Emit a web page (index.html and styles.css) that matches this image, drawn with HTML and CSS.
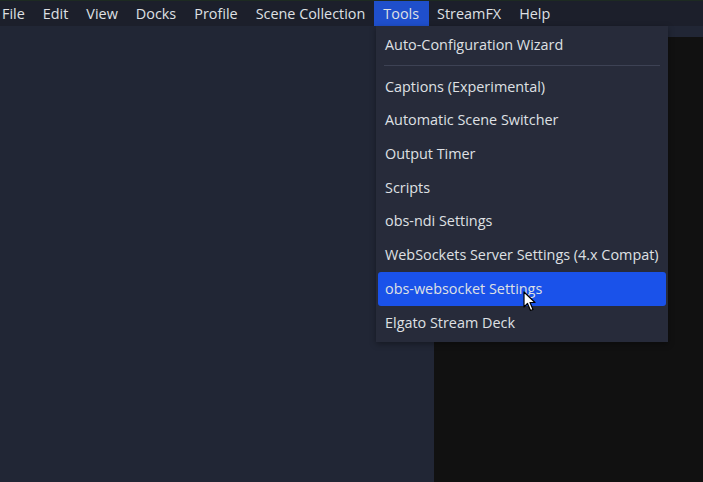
FILE: index.html
```html
<!DOCTYPE html>
<html lang="en">
<head>
    <meta charset="UTF-8">
    <title>OBS Tools Menu</title>
    <link rel="stylesheet" href="styles.css">
</head>
<body>

    <!-- Menu Bar -->
    <div class="menubar">
        <span class="menu-item">File</span>
        <span class="menu-item">Edit</span>
        <span class="menu-item">View</span>
        <span class="menu-item">Docks</span>
        <span class="menu-item">Profile</span>
        <span class="menu-item">Scene Collection</span>
        <span class="menu-item open">Tools</span>
        <span class="menu-item">StreamFX</span>
        <span class="menu-item">Help</span>
    </div>

    <!-- Workspace -->
    <div class="workspace">
        <div class="left-pane"></div>
        <div class="right-pane">
            <div class="preview"></div>
        </div>
    </div>

    <!-- Tools dropdown -->
    <div class="dropdown">
        <div class="entry">Auto-Configuration Wizard</div>
        <div class="separator"></div>
        <div class="entry">Captions (Experimental)</div>
        <div class="entry">Automatic Scene Switcher</div>
        <div class="entry">Output Timer</div>
        <div class="entry">Scripts</div>
        <div class="entry">obs-ndi Settings</div>
        <div class="entry">WebSockets Server Settings (4.x Compat)</div>
        <div class="entry active">obs-websocket Settings</div>
        <div class="entry">Elgato Stream Deck</div>
    </div>

    <!-- Mouse pointer -->
    <svg class="pointer" width="14" height="21" viewBox="0 0 14 21">
        <path d="M1 1 L1 16 L4.5 12.5 L7.5 19.5 L10 18.5 L7 11.5 L12 11.5 Z" fill="#ffffff" stroke="#000000" stroke-width="1.2" stroke-linejoin="round"/>
    </svg>

</body>
</html>
```

FILE: styles.css
```css
/* Basic Styling */
body {
    margin: 0;
    width: 703px;
    height: 482px;
    overflow: hidden;
    position: relative;
    font-family: "Open Sans", "Noto Sans", sans-serif;
    font-size: 14.4px;
    color: #dfe0e4;
    background-color: #212635;
}

/* Menu Bar */
.menubar {
    display: flex;
    gap: 18px;
    height: 26px;
    align-items: center;
    padding-left: 2px;
    background-color: #1c1f2b;
    border-top: 1px solid #1d2a22;
    box-sizing: border-box;
}

.menu-item {
    line-height: 25px;
    white-space: nowrap;
}

.menu-item.open {
    background-color: #1f4fcc;
    padding: 0 10px 0 9px;
    margin: 0 -10px 0 -9px;
}

/* Workspace */
.workspace {
    display: flex;
    height: 456px;
}

.left-pane {
    width: 434px;
    background-color: #212635;
}

.right-pane {
    flex: 1;
    padding-top: 11px;
    display: flex;
    flex-direction: column;
}

.preview {
    flex: 1;
    background-color: #111111;
}

/* Dropdown */
.dropdown {
    position: absolute;
    left: 376px;
    top: 26px;
    width: 292px;
    padding: 2px 2px 3px;
    box-sizing: border-box;
    background-color: #272b3a;
    box-shadow: 0 2px 6px rgba(0, 0, 0, 0.35);
}

.entry {
    height: 33.7px;
    line-height: 33.7px;
    padding-left: 7px;
    white-space: nowrap;
    border-radius: 3px;
}

.entry.active {
    background-color: #1a52ea;
}

.separator {
    height: 1px;
    margin: 3px 6px 4px 6px;
    background-color: #3d4254;
}

/* Pointer */
.pointer {
    position: absolute;
    left: 523px;
    top: 291px;
}
```
